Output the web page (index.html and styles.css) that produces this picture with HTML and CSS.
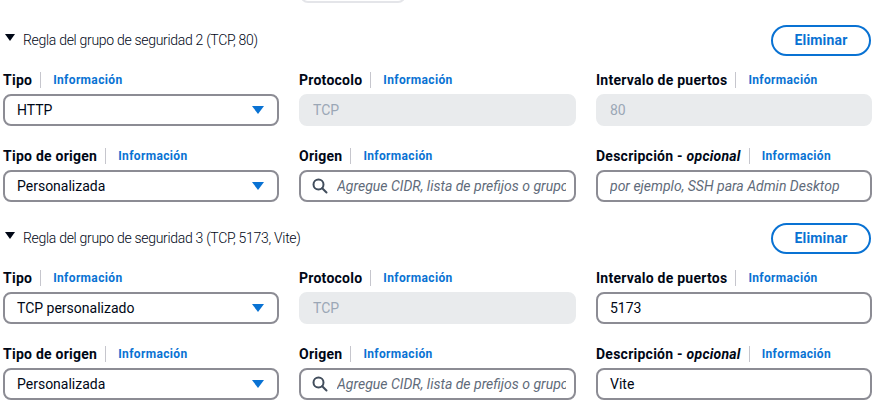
FILE: index.html
```html
<!DOCTYPE html>
<html lang="es">
<head>
<meta charset="utf-8">
<link rel="stylesheet" href="styles.css">
</head>
<body>
<div class="page">
  <div class="stub-row"><div class="stub"></div></div>

  <section class="rule">
    <div class="rule-head">
      <div class="rule-title"><span class="caret"></span><span>Regla del grupo de seguridad 2 (TCP, 80)</span></div>
      <button class="btn">Eliminar</button>
    </div>
    <div class="grid">
      <div class="field">
        <div class="label"><span class="lt">Tipo</span><a class="info">Información</a></div>
        <div class="control select"><span class="val">HTTP</span><span class="dd"></span></div>
      </div>
      <div class="field">
        <div class="label"><span class="lt">Protocolo</span><a class="info">Información</a></div>
        <div class="control disabled"><span class="val">TCP</span></div>
      </div>
      <div class="field">
        <div class="label"><span class="lt">Intervalo de puertos</span><a class="info">Información</a></div>
        <div class="control disabled"><span class="val">80</span></div>
      </div>
      <div class="field">
        <div class="label"><span class="lt">Tipo de origen</span><a class="info">Información</a></div>
        <div class="control select"><span class="val">Personalizada</span><span class="dd"></span></div>
      </div>
      <div class="field">
        <div class="label"><span class="lt">Origen</span><a class="info">Información</a></div>
        <div class="control search">
          <svg class="mag" width="16" height="16" viewBox="0 0 16 16"><circle cx="6.5" cy="6.5" r="5" fill="none" stroke="#414d5c" stroke-width="2"/><path d="M10.2 10.2 L14.5 14.5" stroke="#414d5c" stroke-width="2" stroke-linecap="round"/></svg>
          <span class="ph">Agregue CIDR, lista de prefijos o grupos de seguridad</span>
        </div>
      </div>
      <div class="field">
        <div class="label"><span class="lt">Descripción - <em>opcional</em></span><a class="info">Información</a></div>
        <div class="control"><span class="ph">por ejemplo, SSH para Admin Desktop</span></div>
      </div>
    </div>
  </section>

  <section class="rule">
    <div class="rule-head">
      <div class="rule-title"><span class="caret"></span><span>Regla del grupo de seguridad 3 (TCP, 5173, Vite)</span></div>
      <button class="btn">Eliminar</button>
    </div>
    <div class="grid">
      <div class="field">
        <div class="label"><span class="lt">Tipo</span><a class="info">Información</a></div>
        <div class="control select"><span class="val">TCP personalizado</span><span class="dd"></span></div>
      </div>
      <div class="field">
        <div class="label"><span class="lt">Protocolo</span><a class="info">Información</a></div>
        <div class="control disabled"><span class="val">TCP</span></div>
      </div>
      <div class="field">
        <div class="label"><span class="lt">Intervalo de puertos</span><a class="info">Información</a></div>
        <div class="control"><span class="val">5173</span></div>
      </div>
      <div class="field">
        <div class="label"><span class="lt">Tipo de origen</span><a class="info">Información</a></div>
        <div class="control select"><span class="val">Personalizada</span><span class="dd"></span></div>
      </div>
      <div class="field">
        <div class="label"><span class="lt">Origen</span><a class="info">Información</a></div>
        <div class="control search">
          <svg class="mag" width="16" height="16" viewBox="0 0 16 16"><circle cx="6.5" cy="6.5" r="5" fill="none" stroke="#414d5c" stroke-width="2"/><path d="M10.2 10.2 L14.5 14.5" stroke="#414d5c" stroke-width="2" stroke-linecap="round"/></svg>
          <span class="ph">Agregue CIDR, lista de prefijos o grupos de seguridad</span>
        </div>
      </div>
      <div class="field">
        <div class="label"><span class="lt">Descripción - <em>opcional</em></span><a class="info">Información</a></div>
        <div class="control"><span class="val">Vite</span></div>
      </div>
    </div>
  </section>
</div>
</body>
</html>
```

FILE: styles.css
```css
* { box-sizing: border-box; }
html, body { margin: 0; padding: 0; background: #fff; }
body {
  font-family: Roboto, "Liberation Sans", Arial, sans-serif;
  color: #000716;
  font-size: 14px;
  overflow: hidden;
}
.page {
  width: 891px;
  height: 408px;
  padding-left: 3px;
  overflow: hidden;
}
.stub-row {
  display: grid;
  grid-template-columns: 276px 277px 276px;
  column-gap: 20px;
  margin-top: -28px;
  height: 31px;
}
.stub {
  grid-column: 2;
  width: 106px;
  height: 31px;
  border: 2px solid #e4e5e9;
  border-radius: 8px;
  margin-left: 1px;
}
.rule {
  margin-top: 21px;
}
.rule + .rule { margin-top: 20px; }
.rule-head {
  display: flex;
  align-items: center;
  justify-content: space-between;
  width: 868px;
  height: 32px;
}
.rule-title {
  display: flex;
  align-items: center;
  font-weight: 300;
  font-size: 14px;
  letter-spacing: -0.3px;
  color: #000716;
  padding-left: 2px;
}
.caret {
  width: 0; height: 0;
  border-left: 5px solid transparent;
  border-right: 5px solid transparent;
  border-top: 7px solid #000716;
  margin-right: 8px;
  margin-top: -5px;
}
.btn {
  font-family: inherit;
  width: 100px;
  height: 31px;
  border: 2px solid #0972d3;
  border-radius: 20px;
  background: #fff;
  color: #0972d3;
  font-weight: 700;
  font-size: 14px;
  letter-spacing: 0.2px;
  padding: 0;
}
.grid {
  margin-top: 14px;
  display: grid;
  grid-template-columns: 276px 277px 276px;
  column-gap: 20px;
  row-gap: 20px;
}
.field { display: flex; flex-direction: column; min-width: 0; }
.label {
  display: flex;
  align-items: center;
  height: 20px;
  margin-bottom: 4px;
}
.lt {
  font-weight: 700;
  font-size: 14px;
  letter-spacing: 0.25px;
  padding-right: 8px;
  border-right: 1px solid #c6c6cd;
  line-height: 16px;
}
.lt em { font-style: italic; }
.info {
  color: #0972d3;
  font-weight: 700;
  font-size: 12px;
  letter-spacing: 0.35px;
  padding-left: 12px;
}
.control {
  height: 32px;
  border: 2px solid #8c8c94;
  border-radius: 8px;
  display: flex;
  align-items: center;
  padding: 0 12px;
  overflow: hidden;
  white-space: nowrap;
}
.val { font-size: 14px; color: #000716; }
.disabled {
  background: #e9ebed;
  border-color: #e9ebed;
}
.disabled .val { color: #9ba7b6; }
.select { justify-content: space-between; }
.dd {
  width: 0; height: 0;
  border-left: 6px solid transparent;
  border-right: 6px solid transparent;
  border-top: 8px solid #0972d3;
  margin-right: 1px;
}
.ph {
  font-style: italic;
  color: #5f6b7a;
  font-size: 14px;
  overflow: hidden;
  min-width: 0;
  flex: 1 1 auto;
}
.search { padding-left: 11px; padding-right: 8px; }
.mag { flex: none; margin-right: 9px; }
```
